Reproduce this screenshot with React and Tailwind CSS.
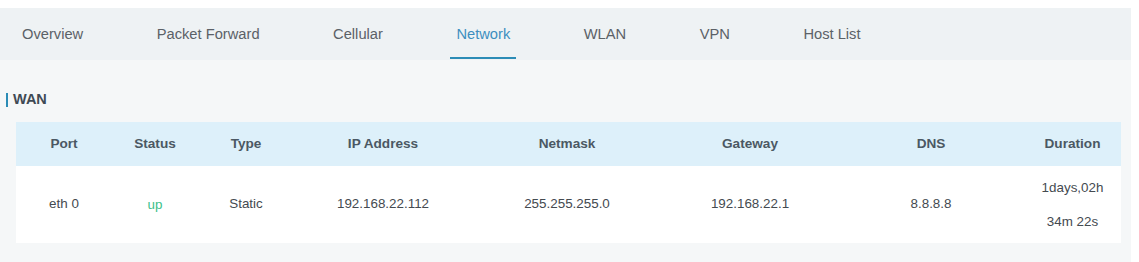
const tabs = ["Overview", "Packet Forward", "Cellular", "Network", "WLAN", "VPN", "Host List"];

const cols = [
  { label: "Port", w: "w-[96px]" },
  { label: "Status", w: "w-[86px]" },
  { label: "Type", w: "w-[96px]" },
  { label: "IP Address", w: "w-[178px]" },
  { label: "Netmask", w: "w-[190px]" },
  { label: "Gateway", w: "w-[176px]" },
  { label: "DNS", w: "w-[186px]" },
  { label: "Duration", w: "w-[97px]" },
];

function Tabs() {
  return (
    <div className="h-[52px] bg-[#eef2f4] flex items-stretch pl-[16px] gap-[61.5px]">
      {tabs.map((t) => {
        const active = t === "Network";
        return (
          <div
            key={t}
            className={`relative flex items-center px-[6px] pt-[1px] text-[14.7px] ${active ? "text-[#3d8fbf]" : "text-[#5b6167]"}`}
          >
            {t}
            {active && <span className="absolute left-0 right-0 bottom-[1px] h-[2px] bg-[#2b8cb6]" />}
          </div>
        );
      })}
    </div>
  );
}

function WanTable() {
  return (
    <div className="mx-[16px] w-[1105px]">
      <div className="flex h-[44px] bg-[#ddf0fa] font-bold text-[13.6px] text-[#4b5863]">
        {cols.map((c) => (
          <div key={c.label} className={`${c.w} flex items-center justify-center`}>
            {c.label}
          </div>
        ))}
      </div>
      <div className="flex h-[77px] bg-white text-[13.4px] text-[#444a50]">
        <div className="w-[96px] flex items-center justify-center">eth 0</div>
        <div className="w-[86px] flex items-center justify-center pt-[2px] text-[#3dbf8a]">up</div>
        <div className="w-[96px] flex items-center justify-center">Static</div>
        <div className="w-[178px] flex items-center justify-center">192.168.22.112</div>
        <div className="w-[190px] flex items-center justify-center">255.255.255.0</div>
        <div className="w-[176px] flex items-center justify-center">192.168.22.1</div>
        <div className="w-[186px] flex items-center justify-center">8.8.8.8</div>
        <div className="w-[97px] flex flex-col items-center justify-center leading-[34px]">
          <span>1days,02h</span>
          <span>34m 22s</span>
        </div>
      </div>
    </div>
  );
}

export default function App() {
  return (
    <div className="w-[1139px] h-[262px] bg-white pt-[8px] font-['Liberation_Sans',Arial,sans-serif]">
      <div className="w-[1131px]">
        <Tabs />
        <div className="h-[202px] bg-[#f5f7f8] pt-[32px]">
          <div className="flex items-center h-[16px] pl-[6px]">
            <span className="w-[2px] h-[14px] bg-[#2b8cb6]" />
            <span className="ml-[5px] font-bold text-[14.5px] text-[#3f4a54]">WAN</span>
          </div>
          <div className="h-[14px]" />
          <WanTable />
        </div>
      </div>
    </div>
  );
}
